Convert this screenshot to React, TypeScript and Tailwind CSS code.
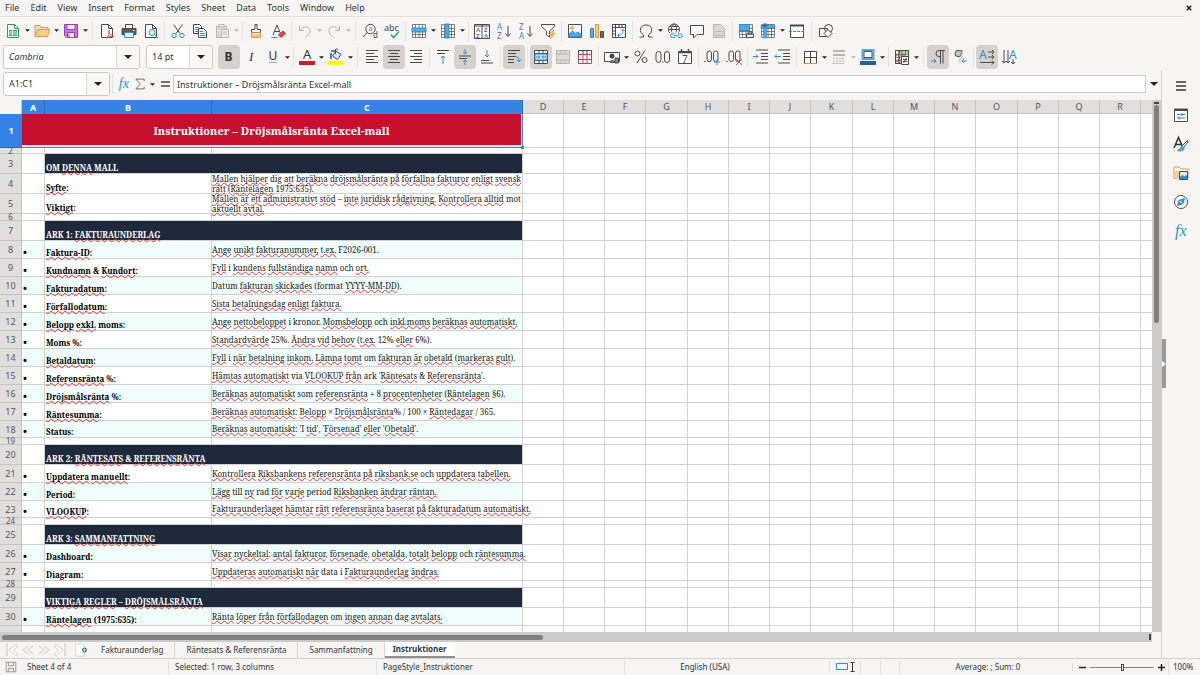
import type { ReactNode } from 'react';
import { clsx } from 'clsx';

const INK = '#4a4a4a';
const BLUE = '#2b8fd6';
const ORANGE = '#e8933a';
const MUTED = '#b8b6b4';

const arrow = (x: number, y: number, dx: number, dy: number, color = BLUE) => (
    <path
        d={
            dx !== 0
                ? `M${x} ${y}h${dx}m${dx > 0 ? -2 : 2}-2l${dx > 0 ? 2 : -2} 2l${dx > 0 ? -2 : 2} 2`
                : `M${x} ${y}v${dy}m-2 ${dy > 0 ? -2 : 2}l2 ${dy > 0 ? 2 : -2}l2 ${dy > 0 ? -2 : 2}`
        }
        stroke={color}
    />
);

const gridLines = 'M1.5 1.5h13v13h-13zM1.5 5.5h13M1.5 8.5h13M1.5 11.5h13M4.5 1.5v13M8 1.5v13M11.5 1.5v13';

const icons: Record<string, ReactNode> = {
    new: (
        <>
            <path d="M2.500 1.500h7l4 4v9h-11z" stroke="#2f9e55" fill="#fff" />
            <path d="M9.500 1.500v4h4" stroke="#2f9e55" />
            <path d="M4 7h8v6H4z" fill="#3fae63" stroke="none" />
            <path d="M4 9h8M4 11h8M7.500 7v6" stroke="#d5f0dd" />
        </>
    ),
    open: (
        <>
            <path d="M1 13V2.500h5l1 2h7V7" stroke={ORANGE} fill="#fbe3b9" />
            <path d="M1 13.500L3.500 6.500h12L13.500 13.500z" stroke={ORANGE} fill="#fbd08a" />
        </>
    ),
    save: (
        <>
            <path d="M1.500 1.500h13v13h-11l-2-2z" stroke="#9a3fae" fill="#c77ad8" />
            <path d="M4 1.500h8v5H4zM4.500 9.500h7v5h-7z" stroke="#9a3fae" fill="#f8eefa" />
            <path d="M6 11v3" stroke="#9a3fae" />
        </>
    ),
    pdf: (
        <>
            <path d="M2.500 1.500h7l4 4v9h-11z" stroke={INK} fill="#fff" />
            <path d="M9.500 1.500v4h4" stroke={INK} />
            <path d="M7.500 15c2-2 3-5 2.500-7.500c-1.500 2 2 5 5 6c-2-.5-5 0-7.500 1.500z" stroke="#e2464b" fill="#fff" />
        </>
    ),
    print: (
        <>
            <path d="M4.500 5V1.500h7V5" stroke={INK} fill="#fff" />
            <path d="M1 5.500h14v6H1z" fill="#5a5a5a" stroke={INK} />
            <path d="M3.500 9.500h9v5h-9z" stroke={BLUE} fill="#e7f3fb" />
            <path d="M12 7.500h1.500" stroke="#fff" />
        </>
    ),
    preview: (
        <>
            <path d="M2.500 1.500h7l4 4v9h-11z" stroke={INK} fill="#fff" />
            <path d="M9.500 1.500v4h4" stroke={INK} />
            <circle cx="9" cy="9.500" r="3" stroke={BLUE} fill="#dceffb" />
            <path d="M11.500 11.500l3.500 3.500" stroke={BLUE} />
        </>
    ),
    cut: (
        <>
            <path d="M3.500 1.500l6.500 9M12.500 1.500L6 10.500" stroke={INK} />
            <circle cx="4" cy="12.500" r="2.200" stroke={BLUE} />
            <circle cx="12" cy="12.500" r="2.200" stroke={BLUE} />
        </>
    ),
    copy: (
        <>
            <path d="M1.500 1.500h6l2 2v7h-8z" stroke={INK} fill="#fff" />
            <path d="M3 4.500h4M3 6.500h3M3 8.500h3" stroke={BLUE} />
            <path d="M6.500 5.500h5l3 3v6h-8z" stroke={INK} fill="#fff" />
            <path d="M8 8.500h3M8 10.500h5M8 12.500h5" stroke={BLUE} />
        </>
    ),
    paste: (
        <>
            <path d="M2.500 3h10v11.500h-10z" stroke={MUTED} fill="#dcdad8" />
            <path d="M5 1.500h5v2.500H5zM7.500 6.500h7v8h-7z" stroke={MUTED} fill="#f2f1f0" />
            <path d="M9 9h4M9 11h4" stroke={MUTED} />
        </>
    ),
    brush: (
        <>
            <path d="M7 1.500h2v5h3.500v3h-9v-3H7z" stroke={INK} fill="#fff" />
            <path d="M3.500 9.500v5h9v-5M6 14v-2M9 14v-2" stroke={ORANGE} fill="#fbd7a5" />
        </>
    ),
    clear: (
        <>
            <path d="M3 12L7 2l4 10M4.500 8.500h5" stroke={INK} />
            <path d="M1.500 14.500h6" stroke={BLUE} />
            <path d="M8.500 12l4.500-4l2.500 2.500L11 14.500z" fill="#e2464b" stroke="#c8323a" />
        </>
    ),
    undo: <path d="M2.500 3v4.500H7M2.500 7.500C6 2 13 3 13 8c0 3-2 4-4.500 6.500" stroke={MUTED} />,
    redo: <path d="M13.500 3v4.500H9M13.500 7.500C10 2 3 3 3 8c0 3 2 4 4.500 6.500" stroke={MUTED} />,
    find: (
        <>
            <circle cx="8.500" cy="6" r="4.700" stroke={INK} />
            <path d="M5 9.500L1 14" stroke={INK} />
            <text x="6.500" y="8" fontSize="7" fill={BLUE} stroke="none">a</text>
            <text x="11" y="15" fontSize="8" fill={INK} stroke="none">d</text>
        </>
    ),
    spell: (
        <>
            <text x="0" y="8" fontSize="9" fill={INK} stroke="none">abc</text>
            <path d="M7 11.500l2.500 3L15 8.500" stroke="#2fa866" strokeWidth="1.500" />
        </>
    ),
    row: (
        <>
            <path d={gridLines} stroke={INK} strokeWidth=".7" fill="#fff" />
            <path d="M1 5h14v4H1z" fill="#53a8e2" stroke={BLUE} />
        </>
    ),
    col: (
        <>
            <path d={gridLines} stroke={INK} strokeWidth=".7" fill="#fff" />
            <path d="M5 1h4v14H5z" fill="#53a8e2" stroke={BLUE} />
        </>
    ),
    sort: (
        <>
            <path d="M.5 1.500h15v14H.5zM8 1.500v14M.5 3h15" stroke={INK} fill="#fff" />
            <g stroke="none" fontSize="6" fontWeight="700">
                <text x="2" y="8.500" fill={BLUE}>A</text>
                <text x="2" y="15" fill="#a347ba">Z</text>
                <text x="10" y="8.500" fill="#a347ba">Z</text>
                <text x="10" y="15" fill={BLUE}>A</text>
            </g>
        </>
    ),
    az: (
        <>
            <g stroke="none" fontSize="8">
                <text x="1" y="7" fill={BLUE}>A</text>
                <text x="1" y="16" fill="#a347ba">Z</text>
            </g>
            <path d="M12 3v10M9.500 10.500L12 13.500l2.500-3" stroke={INK} />
        </>
    ),
    za: (
        <>
            <g stroke="none" fontSize="8">
                <text x="1" y="7" fill="#a347ba">Z</text>
                <text x="1" y="16" fill={BLUE}>A</text>
            </g>
            <path d="M12 3v10M9.500 10.500L12 13.500l2.500-3" stroke={INK} />
        </>
    ),
    filter: (
        <>
            <path d="M1.500 1.500h13v2L9.500 8v6l-3-2V8L1.500 3.500z" stroke={INK} fill="#fff" />
            <path d="M13 7l-4 5h2.500l-1 4L15 10.500h-2.500L14 7z" fill="#f7b955" stroke={ORANGE} strokeWidth=".6" />
        </>
    ),
    image: (
        <>
            <path d="M1.500 1.500h13v13h-13z" stroke={INK} fill="#fff" />
            <path d="M2 14v-3l3.500-3 3 2.500L11 9l3 3v2z" fill="#53a8e2" stroke={BLUE} />
            <circle cx="5" cy="5" r="1.500" fill="#f7b955" stroke={ORANGE} strokeWidth=".6" />
        </>
    ),
    chart: (
        <>
            <path d="M1.500 5.500h3v9h-3z" fill="#53a8e2" stroke={BLUE} />
            <path d="M6.500 1.500h3v13h-3z" fill="#fbd08a" stroke={ORANGE} />
            <path d="M11.500 8.500h3v6h-3z" fill="#6a6a6a" stroke={INK} />
        </>
    ),
    pivot: (
        <>
            <path d="M1.500 1.500h13v13h-13zM1.500 4.500h13M4.500 1.500v13M8 1.500v3M11 1.500v3M1.500 8h3M1.500 11h3" stroke={INK} fill="#fff" />
            <path d="M7 12.500c4 .5 5-2 5-6M10.500 8L12 6.200 13.800 8M8.500 10.500l-2 2 2 2" stroke={BLUE} />
        </>
    ),
    omega: (
        <path d="M1.500 14h4v-2C.5 9 1.500 2 8 2s7.500 7 2.500 10v2h4" stroke={INK} />
    ),
    link: (
        <>
            <circle cx="7" cy="6.500" r="5.500" stroke={INK} fill="#fff" />
            <ellipse cx="7" cy="6.500" rx="2.500" ry="5.500" stroke={INK} />
            <path d="M1.500 6.500h11M2.500 3.500h9" stroke={INK} />
            <path d="M3 9.500h13v6H3z" fill="#f6f5f4" stroke="none" />
            <path d="M8 14.500H5.500a1.800 1.800 0 010-3.600H8M11 14.500h2.500a1.800 1.800 0 000-3.600H11M7 12.700h5" stroke={BLUE} />
        </>
    ),
    comment: <path d="M1.500 2.500h13v9H8L4.500 15v-3.500h-3z" stroke={INK} fill="#fff" />,
    page: (
        <>
            <path d="M2.500 1.500h7l4 4v9h-11z" stroke={MUTED} fill="#dad8d6" />
            <path d="M4.500 8.500h7M4.500 12.500h7" stroke={MUTED} />
        </>
    ),
    printarea: (
        <>
            <path d={gridLines} stroke={INK} strokeWidth=".7" fill="#fff" />
            <path d="M1.500 1.500h10v6h-10z" fill="#53a8e2" stroke={BLUE} />
            <path d="M8.500 11h7v3.500h-7zM10 9h4v2h-4z" fill="#dceffb" stroke={INK} />
        </>
    ),
    freeze: (
        <>
            <path d={gridLines} stroke={INK} strokeWidth=".7" fill="#fff" />
            <path d="M1 2.500h14v2.500H1zM3.500 1h3v14h-3z" fill="#53a8e2" stroke={BLUE} strokeWidth=".6" />
            <path d="M5 0v5M2.500 2.500h5" stroke="#17609a" />
        </>
    ),
    split: (
        <>
            <path d="M1.500 2.500h13v12h-13z" stroke={INK} fill="#fff" />
            <path d="M1 2.500h14" stroke={INK} strokeWidth="2" />
            <path d="M0 8.500h16" stroke={BLUE} strokeDasharray="3 1" />
        </>
    ),
    shapes: (
        <>
            <path d="M1.500 5.500h8v8h-8z" stroke={INK} />
            <circle cx="10.500" cy="5.500" r="4" stroke={INK} />
            <path d="M10 6.500l4 4-4 4-4-4z" stroke={INK} fill="#f6f5f4" />
        </>
    ),
    bold: <text x="3.500" y="12" fontSize="12" fontWeight="700" fill="#333" stroke="none">B</text>,
    italic: <text x="6" y="12" fontSize="13" fontStyle="italic" fontFamily="Liberation Serif" fill="#333" stroke="none">I</text>,
    underline: (
        <>
            <text x="3.500" y="11" fontSize="12" fill="#333" stroke="none">U</text>
            <path d="M4 13.500h8" stroke="#6fb4e6" />
        </>
    ),
    color: (
        <>
            <text x="4" y="10" fontSize="13" fill="#333" stroke="none">A</text>
            <path d="M0 12h16v4H0z" fill="#c62026" stroke="none" />
        </>
    ),
    fill: (
        <>
            <path d="M3 4v6M3 2h5" stroke="#17609a" strokeWidth="1.500" />
            <path d="M8 2l5 3.500-3.500 5L4.500 7z" stroke={INK} fill="#d8ebf8" />
            <path d="M7.500 5V1c0-1.500 2-1.500 2 0" stroke={INK} />
            <path d="M0 12h16v4H0z" fill="#ffff00" stroke="none" />
        </>
    ),
    left: <path d="M2 1.500h12M2 4.500h8M2 7.500h12M2 10.500h8M2 13.500h12" stroke={INK} />,
    center: <path d="M2 1.500h12M4 4.500h8M2 7.500h12M4 10.500h8M2 13.500h12" stroke={INK} />,
    right: <path d="M2 1.500h12M6 4.500h8M2 7.500h12M6 10.500h8M2 13.500h12" stroke={INK} />,
    top: (
        <>
            <path d="M2 1.500h12M2 4.500h8" stroke={INK} />
            {arrow(8, 15, 0, -8)}
        </>
    ),
    middle: (
        <>
            <path d="M2 7h12M2 9.500h8" stroke={INK} />
            {arrow(8, 0, 0, 5)}
            {arrow(8, 16, 0, -5)}
        </>
    ),
    bottom: (
        <>
            <path d="M2 11.500h8M2 14h12" stroke={INK} />
            {arrow(8, 1, 0, 7)}
        </>
    ),
    wrap: (
        <>
            <path d="M2 1.500h12M2 4.500h8M2 7.500h7M2 10.500h6M2 13.500h6" stroke={INK} />
            <path d="M9 7.500c3 0 4 1 4 5M11 10.500l2 2.500 2-2.500" stroke={BLUE} />
        </>
    ),
    merge: (
        <>
            <path d="M1.500 1.500h13v13h-13zM1.500 4.500h13M1.500 11.500h13M6 1.500v3M10 1.500v3M6 11.500v3M10 11.500v3" stroke={INK} fill="#fff" />
            <path d="M2 5h12v6H2z" fill="#cfe6f7" stroke={BLUE} />
            <path d="M3 8h4M9 8h4M5.500 6.500L7 8 5.500 9.500M10.500 6.500L9 8l1.500 1.500" stroke={BLUE} />
        </>
    ),
    splitcells: (
        <path d="M1.500 1.500h13v13h-13zM1.500 5h13M1.500 11h13M6 1.500V5M10 1.500V5M6 11v3.500M10 11v3.500" stroke={MUTED} fill="#dedcda" />
    ),
    unmerge: (
        <>
            <path d="M1.500 1.500h13v4h-13zM6 1.500v4M10 1.500v4" stroke={INK} fill="#fff" />
            <path d="M1.500 5.500h13v9h-13zM1.500 10.500h13M6 5.500v9M10 5.500v9" stroke="#d83a3f" fill="#fff" />
        </>
    ),
    currency: (
        <>
            <path d="M.5 3.500h15v9H.5z" stroke={INK} fill="#fff" />
            <circle cx="8" cy="7" r="2.500" fill={INK} stroke="none" />
            <path d="M6.500 13.500c0-3 4-3 4 0zM11 9h3.500v5H11z" fill="#8a8a8a" stroke={INK} />
        </>
    ),
    percent: (
        <>
            <circle cx="4.500" cy="4.500" r="2.500" stroke={INK} />
            <circle cx="11.500" cy="11" r="2.500" stroke={INK} />
            <path d="M12 1.500L4 14" stroke={INK} />
        </>
    ),
    number: (
        <>
            <rect x="1" y="2.500" width="5" height="11" rx="2.500" stroke={INK} />
            <rect x="9.500" y="2.500" width="5" height="11" rx="2.500" stroke={INK} />
            <path d="M7 13h1.500" stroke={INK} />
        </>
    ),
    date: (
        <>
            <path d="M1.500 2.500h13v12h-13z" stroke={INK} fill="#fff" />
            <path d="M1.500 3.500h13M4.500 0v3M11.500 0v3" stroke={INK} strokeWidth="1.500" />
            <text x="5" y="13.500" fontSize="10" fill={INK} stroke="none">7</text>
        </>
    ),
    adddec: (
        <>
            <path d="M0 12.500h1.500" stroke={INK} />
            <rect x="3" y="2" width="4.500" height="10.500" rx="2.200" stroke={INK} />
            <rect x="9.500" y="2" width="4.500" height="10.500" rx="2.200" stroke={INK} />
            <path d="M10 13h6M13 10v6" stroke={BLUE} />
        </>
    ),
    deldec: (
        <>
            <path d="M0 12.500h1.500" stroke={INK} />
            <rect x="3" y="2" width="4.500" height="10.500" rx="2.200" stroke={INK} />
            <rect x="9.500" y="2" width="4.500" height="10.500" rx="2.200" stroke={INK} />
            <path d="M10 10l6 6M16 10l-6 6" stroke="#e2464b" />
        </>
    ),
    indent: (
        <>
            <path d="M3 1h12M8 4.500h7M8 7.500h7M8 10.500h7M3 14h12" stroke={INK} />
            {arrow(0, 7.5, 5, 0)}
        </>
    ),
    outdent: (
        <>
            <path d="M3 1h12M8 4.500h7M8 7.500h7M8 10.500h7M3 14h12" stroke={INK} />
            {arrow(6, 7.5, -6, 0)}
        </>
    ),
    borders: (
        <>
            <path d="M2.500 14V2.500h12V14M8.500 2.500V14M2.500 8.500h12" stroke={INK} fill="#fff" />
            <path d="M2 14.500h13" stroke={ORANGE} />
        </>
    ),
    lines: (
        <>
            <path d="M2 2h12M2 6h12" stroke={MUTED} strokeWidth="2" />
            <path d="M2 9.500h12M2 12h12M2 14.500h12" stroke={MUTED} strokeDasharray="2 1" />
        </>
    ),
    linecolor: (
        <>
            <path d="M2.500 1h11v9h-11z" stroke="#53a8e2" fill="#fff" strokeWidth="2" />
            <path d="M4 2.500h8v6H4z" stroke={INK} />
            <path d="M0 12h16v4H0z" fill="#2a6099" stroke="none" />
        </>
    ),
    conditional: (
        <>
            <path d="M1.500 1.500h13v13h-13zM5.500 1.500v13" stroke={INK} fill="#fff" />
            <path d="M2 4.500h9v3H2zM2 10.500h6v3H2z" fill="#f08a8a" stroke="none" />
            <path d="M6 2h8v3H6z" fill="#9be09f" stroke="none" />
            <path d={gridLines} stroke={INK} strokeWidth=".6" />
            <path d="M7.500 7.500h7v8h-7z" stroke={INK} fill="#fff" />
            <path d="M9 10.500h4M9 12.500h4M12.500 9l-3 5" stroke={INK} />
        </>
    ),
    ltr: (
        <>
            <path d="M15 1.500H9a3 3 0 000 6h1M10.500 1.500v13M13 1.500v13" stroke={INK} />
            {arrow(1, 12, 5, 0)}
        </>
    ),
    rtl: (
        <>
            <path d="M10 1.500H6a3 3 0 000 6h2z" stroke={INK} fill="#c9c7c5" />
            <path d="M8 1.500v13M10 1.500v9" stroke={MUTED} />
            {arrow(15, 12, -5, 0)}
        </>
    ),
    horizontal: (
        <>
            <text x="0" y="10" fontSize="12" fill={BLUE} stroke="none">A</text>
            {arrow(9, 3, 6, 0, INK)}
            {arrow(9, 8, 6, 0, INK)}
            {arrow(1, 13.5, 14, 0, INK)}
        </>
    ),
    vertical: (
        <>
            <text x="8" y="10" fontSize="12" fill={BLUE} stroke="none">A</text>
            {arrow(3, 1, 0, 13, INK)}
            {arrow(7, 1, 0, 13, INK)}
            {arrow(12, 10, 0, 5, INK)}
        </>
    ),
    fx: (
        <text x="2" y="13" fontSize="16" stroke="none" fill={BLUE} fontFamily="Liberation Serif" fontStyle="italic">
            fx
        </text>
    ),
    sum: <path d="M13.500 4.500v-3h-11l6 6.500-6 6.500h11v-3" stroke={INK} />,
    equals: <path d="M4 6h9M4 10h9" stroke={INK} strokeWidth="1.500" />,
    menu: <path d="M3 4h10M3 8h10M3 12h10" stroke="#333" strokeWidth="1.500" />,
    properties: (
        <>
            <path d="M1.500 2h13v12.500h-13z" stroke={INK} fill="#fff" />
            <path d="M1 3h14" stroke={INK} strokeWidth="2" />
            <path d="M4 7.500h8M4 11h8M9 6v3M6 9.500v3" stroke={BLUE} />
        </>
    ),
    styles: (
        <>
            <path d="M1 12L5.500 1.500 10 12M2.500 8.500h6" stroke="#333" strokeWidth="1.500" />
            <path d="M14.500 4.500L9 10l1.500 2 4.500-6z" stroke={INK} fill="#fff" />
            <path d="M9.500 10.500c-2 0-2 3-5 4 3 1 7 0 6.500-2.500z" fill="#53a8e2" stroke={BLUE} />
        </>
    ),
    gallery: (
        <>
            <path d="M1 13.500V2h5l1.500 2H15v9.500z" stroke={ORANGE} fill="#fff" />
            <path d="M2 14V6h5v8z" fill="#fbd08a" stroke="none" />
            <path d="M6.500 6.500h8v8h-8z" stroke={INK} fill="#d8ebf8" />
            <path d="M7 14v-2l2.500-2 2 1.500L13 10l1 1.500V14z" fill={BLUE} stroke="none" />
        </>
    ),
    navigator: (
        <>
            <circle cx="8" cy="8" r="6.500" stroke={INK} fill="#fff" />
            <path d="M11.500 4.500L10 9.500l-5.500 2L6 6.500z" fill={BLUE} stroke={BLUE} />
            <circle cx="8" cy="8" r="1" fill="#fff" stroke="none" />
        </>
    ),
    disk: (
        <path d="M2.500 2.500h11v11h-11zM5 2.500v4h6v-4M5 13.500v-4h6v4" stroke="#8f8d8b" />
    ),
    first: <path d="M2 2v12h1.500V2zM13 2L5 8l8 6v-3L9 8l4-3z" stroke="#cfcdcb" strokeWidth=".8" fill="#fff" />,
    prev: <path d="M8 4L3 8l5 4M13 4L8 8l5 4" stroke="#dcdad8" strokeWidth="1.500" />,
    next: <path d="M3 4l5 4-5 4M8 4l5 4-5 4" stroke="#dcdad8" strokeWidth="1.500" />,
    last: <path d="M12.500 2v12H14V2zM3 2l8 6-8 6v-3l4-3-4-3z" stroke="#cfcdcb" strokeWidth=".8" fill="#fff" />,
    addsheet: (
        <>
            <path d="M2 1h7l3 3v11H2z" fill="#fff" stroke="#d4d2d0" />
            <circle cx="12" cy="8" r="2.800" fill="#2a6fb5" stroke="none" />
            <path d="M10.500 8h3M12 6.500v3" stroke="#fff" />
        </>
    ),
};

const Icon = ({ name, size = 'size-4' }: { name: string; size?: string }) => (
    <svg viewBox="0 0 16 16" fill="none" className={clsx('shrink-0 overflow-visible', size)} aria-hidden="true">
        {icons[name]}
    </svg>
);

const Caret = ({ muted = false, big = false }: { muted?: boolean; big?: boolean }) => (
    <svg viewBox="0 0 8 4" className={clsx('shrink-0', big ? 'h-1 w-2' : 'h-[3px] w-[5px]')} aria-hidden="true">
        <path d="M0 0h8L4 4z" fill={muted ? MUTED : '#222'} />
    </svg>
);

const Sep = ({ wide = false }: { wide?: boolean }) => (
    <div className={clsx('flex shrink-0 justify-center', wide ? 'w-[7px]' : 'w-[5px]')}>
        <div className="h-5 w-px bg-[#e6e4e2]" />
    </div>
);

type Tool = { icon: string; menu?: boolean; on?: boolean; off?: boolean } | '|' | '||';

const standardTools: Tool[] = [
    { icon: 'new', menu: true }, { icon: 'open', menu: true }, { icon: 'save', menu: true }, '||',
    { icon: 'pdf' }, { icon: 'print' }, { icon: 'preview' }, '|',
    { icon: 'cut' }, { icon: 'copy' }, { icon: 'paste', menu: true, off: true }, '|',
    { icon: 'brush' }, { icon: 'clear' }, '|',
    { icon: 'undo', menu: true, off: true }, { icon: 'redo', menu: true, off: true }, '||',
    { icon: 'find' }, { icon: 'spell' }, '|',
    { icon: 'row', menu: true }, { icon: 'col', menu: true }, '|',
    { icon: 'sort' }, { icon: 'az' }, { icon: 'za' }, { icon: 'filter' }, '|',
    { icon: 'image' }, { icon: 'chart' }, { icon: 'pivot' }, '|',
    { icon: 'omega', menu: true }, { icon: 'link' }, { icon: 'comment' }, { icon: 'page', off: true }, '|',
    { icon: 'printarea' }, { icon: 'freeze', menu: true }, { icon: 'split' }, '||',
    { icon: 'shapes' },
];

const formatTools: Tool[] = [
    { icon: 'bold', on: true }, { icon: 'italic' }, { icon: 'underline', menu: true }, '|',
    { icon: 'color', menu: true }, { icon: 'fill', menu: true }, '||',
    { icon: 'left' }, { icon: 'center', on: true }, { icon: 'right' }, '|',
    { icon: 'top' }, { icon: 'middle', on: true }, { icon: 'bottom' }, '|',
    { icon: 'wrap', on: true }, '|',
    { icon: 'merge', on: true }, { icon: 'splitcells', off: true }, { icon: 'unmerge' }, '|',
    { icon: 'currency', menu: true }, { icon: 'percent' }, { icon: 'number' }, { icon: 'date' }, '|',
    { icon: 'adddec' }, { icon: 'deldec' }, '|',
    { icon: 'indent' }, { icon: 'outdent' }, '|',
    { icon: 'borders', menu: true }, { icon: 'lines', menu: true, off: true }, { icon: 'linecolor', menu: true }, '|',
    { icon: 'conditional', menu: true }, '||',
    { icon: 'ltr', on: true }, { icon: 'rtl' }, '|',
    { icon: 'horizontal', on: true }, { icon: 'vertical' },
];

const Toolbar = ({ tools }: { tools: Tool[] }) => (
    <div className="flex items-center">
        {tools.map((tool, i) =>
            typeof tool === 'string' ? (
                <Sep key={i} wide={tool === '||'} />
            ) : (
                <div key={i} className="flex items-center">
                    <button
                        type="button"
                        aria-label={tool.icon}
                        aria-pressed={tool.on}
                        disabled={tool.off}
                        className={clsx(
                            'flex h-6 w-[22px] items-center justify-center rounded-sm',
                            tool.on ? 'bg-[#d5d1cd]' : 'hover:bg-[#e8e6e4]',
                        )}
                    >
                        <Icon name={tool.icon} />
                    </button>
                    {tool.menu && (
                        <button
                            type="button"
                            aria-label={`${tool.icon} options`}
                            disabled={tool.off}
                            className="flex h-6 w-[7px] items-center justify-center"
                        >
                            <Caret muted={tool.off} />
                        </button>
                    )}
                </div>
            ),
        )}
    </div>
);

const Combo = ({ label, value, width, italic = false }: { label: string; value: string; width: string; italic?: boolean }) => (
    <div className={clsx('flex h-6 shrink-0 overflow-hidden rounded-[3px] border border-[#cdc7c2] bg-white', width)}>
        <input
            aria-label={label}
            defaultValue={value}
            className={clsx('min-w-0 flex-1 px-[5px] text-[9px] text-[#2e3436] outline-none', italic && 'italic')}
        />
        <button
            type="button"
            aria-label={`${label} list`}
            className="flex w-[23px] items-center justify-center border-l border-[#dcd8d5] bg-[#f9f8f7]"
        >
            <Caret big />
        </button>
    </div>
);

type Row =
    | { kind: 'gap'; h: string }
    | { kind: 'section'; h: string; label: string }
    | { kind: 'item'; h: string; label: string; text: string; bullet?: boolean; tint?: boolean };

const section = (label: string): Row => ({ kind: 'section', h: 'h-[19px]', label });
const gap = (h = 'h-1.5'): Row => ({ kind: 'gap', h });
const item = (label: string, text: string, tint = false, h = 'h-[17px]'): Row => ({
    kind: 'item', h, label, text, tint, bullet: true,
});

// Words between tildes are flagged by the spell checker
const rows: Row[] = [
    gap('h-[5px]'),
    section('OM ~DENNA~ MALL'),
    {
        kind: 'item', h: 'h-[19px]', label: '~Syfte~:',
        text: '~Mallen~ ~hjälper~ dig ~att~ ~beräkna~ ~dröjsmålsränta~ ~på~ ~förfallna~ ~fakturor~ ~enligt~ ~svensk~\n~rätt~ (~Räntelagen~ 1975:635).',
    },
    {
        kind: 'item', h: 'h-[19px]', label: '~Viktigt~:',
        text: '~Mallen~ ~är~ ~ett~ ~administrativt~ ~stöd~ – ~inte~ ~juridisk~ ~rådgivning.~ ~Kontrollera~ ~alltid~ mot\n~aktuellt~ ~avtal.~',
    },
    gap(),
    section('ARK 1: ~FAKTURAUNDERLAG~'),
    item('~Faktura-ID~:', '~Ange~ ~unikt~ ~fakturanummer,~ ~t.ex.~ F2026-001.', true),
    item('~Kundnamn~ & ~Kundort~:', '~Fyll~ i ~kundens~ ~fullständiga~ ~namn~ och ~ort.~'),
    item('~Fakturadatum~:', 'Datum ~fakturan~ ~skickades~ (format ~YYYY-MM-DD~).', true),
    item('~Förfallodatum~:', '~Sista~ ~betalningsdag~ ~enligt~ ~faktura.~'),
    item('~Belopp~ ~exkl.~ moms:', '~Ange~ ~nettobeloppet~ i kronor. ~Momsbelopp~ och ~inkl.moms~ ~beräknas~ ~automatiskt.~', true),
    item('Moms %:', '~Standardvärde~ 25%. ~Ändra~ ~vid~ ~behov~ (~t.ex.~ 12% ~eller~ 6%).'),
    item('~Betaldatum~:', '~Fyll~ i ~när~ ~betalning~ ~inkom.~ ~Lämna~ ~tomt~ om ~fakturan~ ~är~ ~obetald~ (~markeras~ ~gult~).', true),
    item('~Referensränta~ %:', '~Hämtas~ ~automatiskt~ via ~VLOOKUP~ ~från~ ark \'~Räntesats~ & ~Referensränta~\'.'),
    item('~Dröjsmålsränta~ %:', '~Beräknas~ ~automatiskt~ som ~referensränta~ + 8 ~procentenheter~ (~Räntelagen~ §6).', true),
    item('~Räntesumma~:', '~Beräknas~ ~automatiskt~: ~Belopp~ × ~Dröjsmålsränta~% / 100 × ~Räntedagar~ / 365.'),
    item('Status:', '~Beräknas~ ~automatiskt~: \'I ~tid~\', \'~Försenad~\' ~eller~ \'~Obetald~\'.', true, 'h-4'),
    gap(),
    section('ARK 2: ~RÄNTESATS~ & ~REFERENSRÄNTA~'),
    item('~Uppdatera~ ~manuellt~:', '~Kontrollera~ ~Riksbankens~ ~referensränta~ ~på~ ~riksbank.se~ och ~uppdatera~ ~tabellen.~'),
    item('Period:', '~Lägg~ till ~ny~ rad ~för~ ~varje~ period ~Riksbanken~ ~ändrar~ ~räntan.~', true),
    item('~VLOOKUP~:', '~Fakturaunderlaget~ ~hämtar~ ~rätt~ ~referensränta~ ~baserat~ ~på~ ~fakturadatum~ ~automatiskt.~', false, 'h-4'),
    gap(),
    section('ARK 3: ~SAMMANFATTNING~'),
    item('Dashboard:', '~Visar~ ~nyckeltal~: ~antal~ ~fakturor~, ~försenade~, ~obetalda~, ~totalt~ ~belopp~ och ~räntesumma.~', true),
    item('Diagram:', '~Uppdateras~ ~automatiskt~ ~när~ data i ~Fakturaunderlag~ ~ändras.~'),
    gap(),
    section('~VIKTIGA~ ~REGLER~ – ~DRÖJSMÅLSRÄNTA~'),
    item('~Räntelagen~ (1975:635):', '~Ränta~ ~löper~ ~från~ ~förfallodagen~ om ~ingen~ ~annan~ dag ~avtalats.~', true),
];

const Spelled = ({ text }: { text: string }) => (
    <span>
        {text.split('~').map((part, i) =>
            i % 2 ? (
                <span
                    key={i}
                    className="underline decoration-[#e03030] decoration-wavy decoration-1 underline-offset-0 [text-decoration-skip-ink:none]"
                >
                    {part}
                </span>
            ) : (
                part
            ),
        )}
    </span>
);

const extraColumns = 'DEFGHIJKLMNOPQRS'.split('');
const line = 'border-r border-b border-[#d0d0d0] p-0';
const headCell = 'border-r border-b border-[#c6c4c2] p-0 bg-[#e1dfdd] font-normal';

const BlankCells = () => (
    <>
        {extraColumns.map((c) => (
            <td key={c} className={line} />
        ))}
    </>
);

const RowCells = ({ row }: { row: Row }) => {
    if (row.kind === 'gap') {
        return (
            <>
                <td className={line} />
                <td className={line} />
                <td className={line} />
            </>
        );
    }

    if (row.kind === 'section') {
        return (
            <>
                <td className={line} />
                <td colSpan={2} className={clsx(line, 'bg-[#1e293b]')}>
                    <div className={clsx('flex items-end whitespace-pre pl-px leading-[10px] font-bold text-white', row.h)}>
                        <Spelled text={row.label} />
                    </div>
                </td>
            </>
        );
    }

    const cell = clsx(line, row.tint && 'bg-[#effefb]');
    return (
        <>
            <td className={cell}>
                <div className={clsx('flex items-end pl-px text-[11px] leading-3', row.h)}>{row.bullet && '•'}</div>
            </td>
            <td className={cell}>
                <div className={clsx('flex items-end whitespace-pre pl-px leading-[10px] font-bold', row.h)}>
                    <Spelled text={row.label} />
                </div>
            </td>
            <td className={cell}>
                <div className={clsx('flex items-center whitespace-pre leading-[10px] text-[#222]', row.h)}>
                    <Spelled text={row.text} />
                </div>
            </td>
        </>
    );
};

const Sheet = () => (
    <table className="w-[1182px] table-fixed border-separate border-spacing-0 text-[9px] leading-none text-[#555]">
        <colgroup>
            <col className="w-[22px]" />
            <col className="w-[23px]" />
            <col className="w-[167px]" />
            <col className="w-[311px]" />
            {extraColumns.map((c, i) => (
                <col key={c} className={i % 4 === 3 ? 'w-[42px]' : 'w-[41px]'} />
            ))}
        </colgroup>
        <thead>
            <tr>
                <td className="border-r border-[#c6c4c2] bg-[#f6f5f4] p-0">
                    <div className="h-3.5" />
                </td>
                {['A', 'B', 'C'].map((c) => (
                    <th key={c} scope="col" className="border-r border-[#2a6cbf] bg-[#3584e4] p-0 font-bold text-white">
                        {c}
                    </th>
                ))}
                {extraColumns.map((c) => (
                    <th key={c} scope="col" className={headCell}>
                        {c === 'S' ? '' : c}
                    </th>
                ))}
            </tr>
        </thead>
        <tbody>
            <tr>
                <th scope="row" className="border-b border-[#2a6cbf] bg-[#3584e4] p-0 text-white">
                    1
                </th>
                <td colSpan={3} className="relative border-r border-b border-[#3584e4] p-0">
                    <div className="flex h-[33px] items-center justify-center border-r border-b-2 border-[#dbe8fa] bg-[#c8102e] pt-0.5 font-['Noto_Serif','DejaVu_Serif_Condensed',serif] text-[11px] font-bold text-white">
                        Instruktioner – Dröjsmålsränta Excel-mall
                    </div>
                    <span className="absolute -right-0.5 -bottom-0.5 size-[3px] bg-[#3584e4]" />
                </td>
                <BlankCells />
            </tr>
            {rows.map((row, i) => (
                <tr key={i} className="font-['Noto_Serif','DejaVu_Serif_Condensed',serif] text-[8px] text-black">
                    <th scope="row" className={clsx(headCell, "font-['Noto_Sans',sans-serif] text-[#555]")}>
                        <div className={clsx('flex items-center justify-center', row.h, row.kind === 'gap' ? 'text-[8px] leading-[6px]' : 'text-[9px]')}>
                            {i + 2}
                        </div>
                    </th>
                    <RowCells row={row} />
                    <BlankCells />
                </tr>
            ))}
            <tr>
                <th className={headCell}>
                    <div className="h-[17px]" />
                </th>
                <RowCells row={gap()} />
                <BlankCells />
            </tr>
        </tbody>
    </table>
);

const menus = ['File', 'Edit', 'View', 'Insert', 'Format', 'Styles', 'Sheet', 'Data', 'Tools', 'Window', 'Help'];
const sheets = ['Fakturaunderlag', 'Räntesats & Referensränta', 'Sammanfattning', 'Instruktioner'];
const sidebar = ['menu', 'properties', 'styles', 'gallery', 'navigator', 'fx'];

const App = () => (
    <div className="flex h-screen flex-col overflow-hidden bg-[#f6f5f4] font-['Noto_Sans',sans-serif] text-[9px] text-[#2e3436]">
        <nav className="mr-4 flex h-[17px] shrink-0 items-center gap-px border-b border-[#e4e2e0]">
            {menus.map((m) => (
                <button key={m} type="button" className="px-[5px]">{m}</button>
            ))}
            <button type="button" aria-label="Close document" className="-mr-2 ml-auto">
                <svg viewBox="0 0 8 8" className="size-1.5" aria-hidden="true">
                    <path d="M1 1l6 6M7 1L1 7" stroke="#222" strokeWidth="2" />
                </svg>
            </button>
        </nav>

        <div className="flex h-[27px] shrink-0 items-center pl-0.5">
            <Toolbar tools={standardTools} />
        </div>
        <div className="flex h-[27px] shrink-0 items-center pb-px pl-[3px]">
            <Combo label="Font name" value="Cambria" width="w-[137px]" italic />
            <div className="w-1.5" />
            <Combo label="Font size" value="14 pt" width="w-[67px]" />
            <div className="w-[5px]" />
            <Toolbar tools={formatTools} />
        </div>

        <div className="flex min-h-0 flex-1">
            <div className="flex min-w-0 flex-1 flex-col">
                <div className="flex h-[29px] shrink-0 items-center pb-[3px] pl-[3px]">
                    <Combo label="Name box" value="A1:C1" width="w-[107px]" />
                    <Sep />
                    <button type="button" aria-label="Function wizard" className="ml-px flex w-4 justify-center">
                        <Icon name="fx" size="size-3.5" />
                    </button>
                    <button type="button" aria-label="Select function" className="flex w-4 justify-center">
                        <Icon name="sum" size="size-3" />
                    </button>
                    <button type="button" aria-label="Function options" className="flex w-2 justify-center">
                        <Caret />
                    </button>
                    <button type="button" aria-label="Formula" className="flex w-[17px] justify-center">
                        <Icon name="equals" />
                    </button>
                    <input
                        aria-label="Input line"
                        defaultValue="Instruktioner – Dröjsmålsränta Excel-mall"
                        className="h-[18px] min-w-0 flex-1 border border-[#cdcbc9] bg-white px-[3px] text-[9px] outline-none"
                    />
                    <button type="button" aria-label="Expand formula bar" className="flex w-[15px] justify-center">
                        <Caret big />
                    </button>
                </div>

                <div className="flex min-h-0 flex-1">
                    <div className="min-w-0 flex-1 overflow-hidden bg-white">
                        <Sheet />
                    </div>
                    <div className="w-[9px] shrink-0 bg-[#cbcbcb] px-0.5">
                        <div className="h-1 border-b-2 border-[#444]" />
                        <div className="mt-px h-[41%] rounded-full bg-[#7f7f7f]" />
                    </div>
                </div>
                <div className="mr-[9px] flex h-2.5 shrink-0 items-center bg-[#cbcbcb] pl-0.5">
                    <div className="h-[5px] w-[47%] rounded-full bg-[#7f7f7f]" />
                    <div className="mr-px ml-auto h-1.5 w-0.5 bg-[#444]" />
                </div>
                <div className="flex h-4 shrink-0 items-center text-[8px]">
                    <div className="flex w-[72px] pl-1">
                        {['first', 'prev', 'next', 'last'].map((n) => (
                            <button key={n} type="button" aria-label={`${n} sheet`}>
                                <Icon name={n} />
                            </button>
                        ))}
                    </div>
                    <button type="button" aria-label="Add sheet" className="flex w-[18px] justify-center">
                        <Icon name="addsheet" size="size-3.5" />
                    </button>
                    {sheets.map((s, i) => (
                        <button
                            key={s}
                            type="button"
                            className={clsx(
                                'h-4',
                                i === 3 ? 'border-b-2 border-[#8f8f8f] bg-white px-2 font-bold' : 'border-r border-[#dad8d6] px-[11px]',
                            )}
                        >
                            {s}
                        </button>
                    ))}
                </div>
            </div>

            <aside className="flex w-[39px] shrink-0 items-start border-l border-[#d0cecc]">
                <div className="mt-[268px] flex h-[49px] w-1 shrink-0 items-center bg-[#9a9998]">
                    <svg viewBox="0 0 4 6" className="h-1.5 w-1" aria-hidden="true">
                        <path d="M0 0l4 3-4 3z" fill="#fff" />
                    </svg>
                </div>
                <div className="flex flex-1 flex-col items-center gap-[13px] pt-[7px] pr-1">
                    {sidebar.map((s) => (
                        <button key={s} type="button" aria-label={s}>
                            <Icon name={s} />
                        </button>
                    ))}
                </div>
            </aside>
        </div>

        <footer className="flex h-[17px] shrink-0 items-center border-t border-[#d4d2d0] text-[8px]">
            <div className="flex w-[27px] pl-1"><Icon name="disk" size="size-3.5" /></div>
            <span className="w-[141px]">Sheet 4 of 4</span>
            <span className="w-[208px] border-l border-[#e2e0de] pl-1.5">Selected: 1 row, 3 columns</span>
            <span className="w-[248px] border-l border-[#e2e0de] pl-1.5">PageStyle_Instruktioner</span>
            <span className="flex-1 border-l border-[#e2e0de] pr-11 text-center">English (USA)</span>
            <span className="flex w-[31px] items-center border-l border-[#e2e0de] pl-1.5">
                <svg viewBox="0 0 20 12" className="h-3 w-5" fill="none" aria-hidden="true">
                    <path d="M.5 2.500h11v6H.5z" stroke={BLUE} />
                    <path d="M14.500 1.500h4M16.500 1.500v9M14.500 10.500h4" stroke="#333" />
                </svg>
            </span>
            <span className="h-3 w-5 border-l border-[#e2e0de]" />
            <span className="h-3 w-5 border-x border-[#e2e0de]" />
            <span className="w-[172px] pl-1 text-center">Average: ; Sum: 0</span>
            <label className="flex w-[96px] items-center gap-1 border-l border-[#e2e0de] pl-1.5">
                <svg viewBox="0 0 7 7" className="size-[7px]" aria-hidden="true">
                    <path d="M0 3.500h7" stroke="#222" strokeWidth="1.500" />
                </svg>
                <input type="range" aria-label="Zoom" defaultValue={50} className="h-2 w-16 appearance-none bg-transparent [&::-webkit-slider-runnable-track]:h-px [&::-webkit-slider-runnable-track]:bg-[#888] [&::-webkit-slider-thumb]:-mt-[3px] [&::-webkit-slider-thumb]:h-[7px] [&::-webkit-slider-thumb]:w-[3px] [&::-webkit-slider-thumb]:appearance-none [&::-webkit-slider-thumb]:border [&::-webkit-slider-thumb]:border-[#444] [&::-webkit-slider-thumb]:bg-white" />
                <svg viewBox="0 0 7 7" className="size-[7px]" aria-hidden="true">
                    <path d="M0 3.500h7M3.500 0v7" stroke="#222" strokeWidth="1.500" />
                </svg>
            </label>
            <span className="w-8 border-l border-[#e2e0de] pl-1">100%</span>
        </footer>
    </div>
);

export default App;
